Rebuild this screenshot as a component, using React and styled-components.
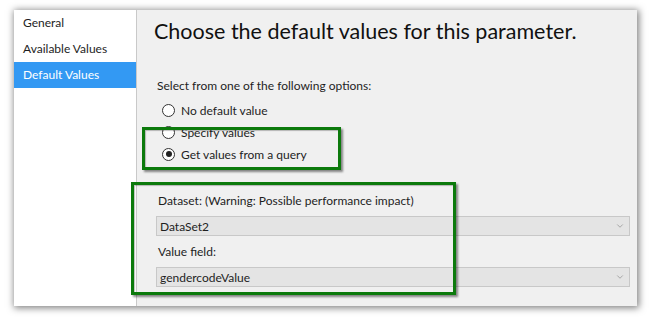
import React, { useState } from 'react';
import styled, { createGlobalStyle } from 'styled-components';
import { ChevronDown } from 'lucide-react';

const GlobalStyle = createGlobalStyle`
  html, body {
    margin: 0;
    background: #ffffff;
  }
  body {
    font-family: Lato, "Noto Sans", sans-serif;
    color: #1e1e1e;
  }
`;

const tabs = ['General', 'Available Values', 'Default Values'];
const options = ['No default value', 'Specify values', 'Get values from a query'];

export default function App() {
  const [activeTab, setActiveTab] = useState('Default Values');
  const [choice, setChoice] = useState('Get values from a query');

  return (
    <Page>
      <GlobalStyle />
      <Frame>
        <Sidebar>
          {tabs.map((tab) => (
            <Tab key={tab} active={activeTab === tab} onClick={() => setActiveTab(tab)}>
              {tab}
            </Tab>
          ))}
        </Sidebar>
        <Main>
          <Title>Choose the default values for this parameter.</Title>
          <Prompt>Select from one of the following options:</Prompt>
          <Options>
            {options.map((opt) => (
              <Option key={opt} onClick={() => setChoice(opt)}>
                <Radio checked={choice === opt} />
                <span>{opt}</span>
              </Option>
            ))}
          </Options>
          <Field gap={28}>
            <Label>Dataset: (Warning: Possible performance impact)</Label>
            <Select>
              <span>DataSet2</span>
              <ChevronDown size={10} strokeWidth={1.4} color="#7a7a7a" />
            </Select>
          </Field>
          <Field gap={8}>
            <Label>Value field:</Label>
            <Select>
              <span>gendercodeValue</span>
              <ChevronDown size={10} strokeWidth={1.4} color="#7a7a7a" />
            </Select>
          </Field>
        </Main>
      </Frame>
      <Highlight left={142} top={127} width={199} height={43} />
      <Highlight left={131} top={182} width={325} height={113} />
    </Page>
  );
}

const Page = styled.div`
  position: relative;
  width: 650px;
  height: 317px;
  padding: 10px 13px 11px 14px;
  box-sizing: border-box;
  overflow: hidden;
`;

const Frame = styled.div`
  display: flex;
  width: 623px;
  height: 296px;
  background: #f0f0f0;
  box-shadow: 1px 1px 7px 1px rgba(0, 0, 0, 0.5);
`;

const Sidebar = styled.div`
  width: 122px;
  flex: none;
  background: #ffffff;
  border-right: 1px solid #c9c9c9;
  display: flex;
  flex-direction: column;
`;

const Tab = styled.div`
  height: 26px;
  display: flex;
  align-items: center;
  padding-left: 9px;
  padding-bottom: 2px;
  box-sizing: border-box;
  font-size: 12px;
  cursor: pointer;
  color: ${(p) => (p.active ? '#ffffff' : '#1e1e1e')};
  background: ${(p) => (p.active ? '#3399f3' : 'transparent')};
`;

const Main = styled.div`
  flex: 1;
  display: flex;
  flex-direction: column;
  padding: 6px 7px 0 17px;
`;

const Title = styled.h1`
  margin: 0;
  font-size: 21.5px;
  line-height: 30px;
  font-weight: 400;
  color: #111111;
`;

const Prompt = styled.div`
  margin: 32px 0 0 3px;
  font-size: 12px;
  line-height: 16px;
`;

const Options = styled.div`
  display: flex;
  flex-direction: column;
  margin: 5px 0 0 8px;
`;

const Option = styled.label`
  height: 22px;
  display: flex;
  align-items: center;
  gap: 6px;
  font-size: 12px;
  cursor: pointer;
`;

const Radio = styled.span`
  width: 11px;
  height: 11px;
  border: 1px solid #333333;
  border-radius: 50%;
  background: #ffffff;
  display: flex;
  align-items: center;
  justify-content: center;

  &::after {
    content: '';
    width: 6px;
    height: 6px;
    border-radius: 50%;
    background: ${(p) => (p.checked ? '#222222' : 'transparent')};
  }
`;

const Field = styled.div`
  display: flex;
  flex-direction: column;
  gap: 7px;
  margin-top: ${(p) => p.gap}px;
`;

const Label = styled.div`
  margin-left: 4px;
  font-size: 12px;
  line-height: 16px;
`;

const Select = styled.div`
  height: 20px;
  margin-left: 2px;
  display: flex;
  align-items: center;
  justify-content: space-between;
  padding: 0 4px 0 3px;
  box-sizing: border-box;
  background: #e4e4e4;
  border: 1px solid #c8c8c8;
  font-size: 12px;
`;

const Highlight = styled.div`
  position: absolute;
  left: ${(p) => p.left}px;
  top: ${(p) => p.top}px;
  width: ${(p) => p.width}px;
  height: ${(p) => p.height}px;
  box-sizing: border-box;
  border: 3px solid #0c7a0c;
  box-shadow: 2px 2px 2px rgba(0, 0, 0, 0.45), inset 1px 1px 1px rgba(0, 0, 0, 0.25);
  pointer-events: none;
`;
